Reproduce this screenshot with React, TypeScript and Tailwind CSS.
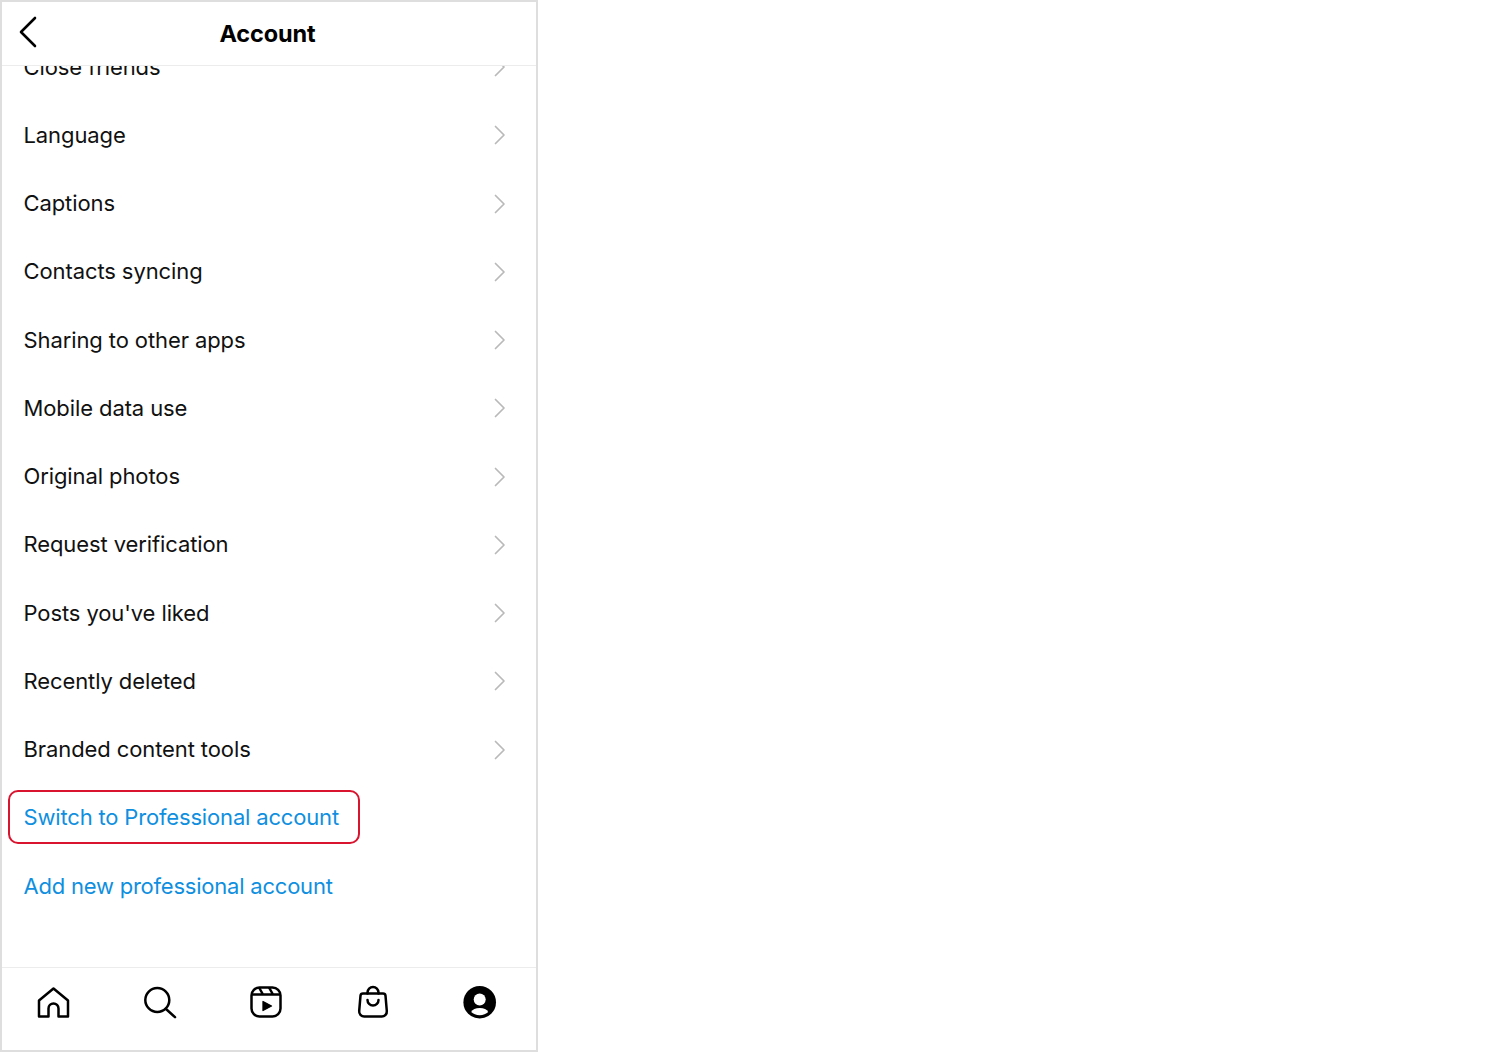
const rows = [
  "Close friends",
  "Language",
  "Captions",
  "Contacts syncing",
  "Sharing to other apps",
  "Mobile data use",
  "Original photos",
  "Request verification",
  "Posts you've liked",
  "Recently deleted",
  "Branded content tools",
];

const Chevron = () => (
  <svg width="14" height="22" viewBox="0 0 14 22" fill="none" stroke="#b9b9b9" strokeWidth="1.7" strokeLinecap="round" strokeLinejoin="round">
    <path d="M2.5 2.5 11 11l-8.500 8.500" />
  </svg>
);

const HomeIcon = () => (
  <svg width="36" height="36" viewBox="0 0 36 36" fill="none" stroke="#000" strokeWidth="2.5" strokeLinejoin="round">
    <path d="M18.500 4.500 4 16.500V32.500H13.500V24.500a5 5 0 0 1 10 0V32.500H33V16.500Z" />
  </svg>
);

const SearchIcon = () => (
  <svg width="36" height="36" viewBox="0 0 36 36" fill="none" stroke="#000" strokeWidth="2.5" strokeLinecap="round">
    <circle cx="15.300" cy="16" r="12" />
    <path d="M24 25 33 33.200" />
  </svg>
);

const ReelsIcon = () => (
  <svg width="36" height="36" viewBox="0 0 36 36" fill="none" stroke="#000" strokeWidth="2.5" strokeLinejoin="round">
    <rect x="3.500" y="3.500" width="29" height="29" rx="8" />
    <path d="M3.500 10.500h29M11 3.500 15 10.500M21 3.500 25 10.500" />
    <path d="M15 17.500v9l8.500-4.500Z" fill="#000" strokeWidth="1.300" />
  </svg>
);

const ShopIcon = () => (
  <svg width="36" height="36" viewBox="0 0 36 36" fill="none" stroke="#000" strokeWidth="2.5" strokeLinecap="round" strokeLinejoin="round">
    <path d="M8 9.500h20a2.500 2.500 0 0 1 2.500 2.200l1.300 15.300a5 5 0 0 1-5 5.500H9.200a5 5 0 0 1-5-5.500l1.300-15.300A2.500 2.500 0 0 1 8 9.500Z" />
    <path d="M12.500 9.500V8.500a5.500 5.500 0 0 1 11 0V9.500" />
    <path d="M12.500 16a5.500 5.500 0 0 0 11 0" />
  </svg>
);

const ProfileIcon = () => (
  <svg width="36" height="36" viewBox="0 0 36 36">
    <circle cx="17.700" cy="18.200" r="16.300" fill="#000" />
    <circle cx="17.700" cy="15.500" r="6" fill="#fff" />
    <path d="M9.200 28C10.500 25.500 13.500 24 17.700 24s7.200 1.500 8.500 4C24.200 30 21.200 31.200 17.700 31.200S11.200 30 9.200 28Z" fill="#fff" />
  </svg>
);

export default function App() {
  return (
    <div className="w-[1510px] h-[1052px] bg-white font-['Inter',sans-serif]">
      <div className="w-[538px] h-[1052px] flex flex-col bg-white shadow-[inset_0_0_0_2px_#dedede]">
        <header className="mx-[2px] mt-[2px] h-[64px] shrink-0 relative z-10 bg-white border-b border-[#ececec] flex items-center justify-center">
          <svg className="absolute left-[15px] top-[13px]" width="24" height="34" viewBox="0 0 24 34" fill="none" stroke="#000" strokeWidth="2.6" strokeLinecap="round" strokeLinejoin="round">
            <path d="M18 3 4 17l14 14" />
          </svg>
          <h1 className="text-[23.500px] font-bold tracking-[-0.1px] text-black ml-[-3px] mt-[1px]">Account</h1>
        </header>

        <div className="flex-1 overflow-hidden mx-[2px]">
          <div className="mt-[-33px]">
            {rows.map((label) => (
              <div key={label} className="h-[68.25px] pl-[21.500px] pr-[29px] flex items-center justify-between text-[22px] tracking-[-0.1px] text-[#111]">
                <span>{label}</span>
                <Chevron />
              </div>
            ))}
            <div className="h-[68.25px] flex items-center">
              <div className="ml-[6px] mt-[-2px] w-[352px] h-[54px] pl-[13.500px] pt-[2px] flex items-center border-2 border-[#d9142f] rounded-[10px] text-[22px] tracking-[-0.17px] text-[#0f8fe0]">
                Switch to Professional account
              </div>
            </div>
            <div className="h-[68.25px] pl-[21.500px] flex items-center text-[22px] tracking-[-0.22px] text-[#0f8fe0]">
              Add new professional account
            </div>
          </div>
        </div>

        <nav className="h-[83px] mb-[2px] mx-[2px] shrink-0 border-t border-[#ececec] flex items-start pt-[16px]">
          <div className="w-[533px] ml-[-2px] grid grid-cols-5 justify-items-center">
            <HomeIcon />
            <SearchIcon />
            <ReelsIcon />
            <ShopIcon />
            <ProfileIcon />
          </div>
        </nav>
      </div>
    </div>
  );
}
